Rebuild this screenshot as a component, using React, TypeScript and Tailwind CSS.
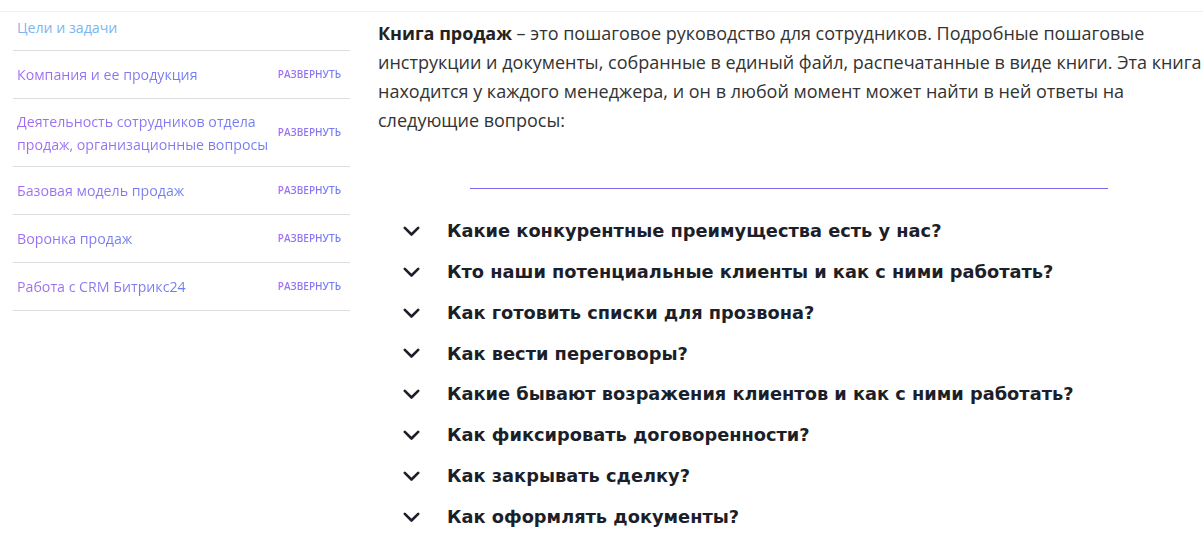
interface SideItem {
    title: string;
    expandable: boolean;
}

const items: SideItem[] = [
    { title: "Компания и ее продукция", expandable: true },
    { title: "Деятельность сотрудников отдела продаж, организационные вопросы", expandable: true },
    { title: "Базовая модель продаж", expandable: true },
    { title: "Воронка продаж", expandable: true },
    { title: "Работа с CRM Битрикс24", expandable: true },
]

const questions = [
    "Какие конкурентные преимущества есть у нас?",
    "Кто наши потенциальные клиенты и как с ними работать?",
    "Как готовить списки для прозвона?",
    "Как вести переговоры?",
    "Какие бывают возражения клиентов и как с ними работать?",
    "Как фиксировать договоренности?",
    "Как закрывать сделку?",
    "Как оформлять документы?",
]

const gradient = "bg-gradient-to-r from-[#a36bf2] to-[#6a7ff0] bg-clip-text text-transparent"

const Chevron = () => (
    <svg width="17" height="11" viewBox="0 0 17 11" className="ml-[25px] shrink-0">
        <polyline points="1.8,1.8 8.5,8.5 15.2,1.8" fill="none" stroke="#1c1f2a" strokeWidth="2.6" strokeLinecap="round" strokeLinejoin="round" />
    </svg>
)

const App = () => {

    // render

    return (
        <div className="w-[1203px] h-[541px] overflow-hidden bg-white font-['Open_Sans',sans-serif]">
            <div className="h-[11px]"></div>
            <div className="w-full h-[1px] bg-[#efefef]"></div>
            <div className="flex flex-row">

                {/* sidebar */}

                <ul className="w-[337px] ml-[13px] flex flex-col shrink-0">
                    <li className="h-[39px] pl-[4px] pb-[7px] flex items-center border-b border-[#dedede]">
                        <span className="text-[14.2px] text-[#7db6ee]">Цели и задачи</span>
                    </li>
                    {
                        items.map(item => (
                            <li
                                key={item.title}
                                className="min-h-[48px] pl-[4px] pr-[9px] py-[10.5px] flex flex-row items-center justify-between gap-1 border-b border-[#dedede]">
                                <span className={`text-[14.2px] leading-[23px] max-w-[262px] ${gradient}`}>{item.title}</span>
                                {
                                    item.expandable ?
                                    <span className={`text-[10px] font-semibold shrink-0 ${gradient}`}>РАЗВЕРНУТЬ</span>
                                    : <></>
                                }
                            </li>
                        ))
                    }
                </ul>

                {/* main content */}

                <div className="ml-[28px] w-[822px] shrink-0 flex flex-col">
                    <p className="mt-[7px] text-[18px] leading-[29px] text-[#333333] w-[830px]">
                        <b className="font-bold text-[#222222]">Книга продаж</b> – это пошаговое руководство для сотрудников. Подробные пошаговые инструкции и документы, собранные в единый файл, распечатанные в виде книги. Эта книга находится у каждого менеджера, и он в любой момент может найти в ней ответы на следующие вопросы:
                    </p>
                    <div className="mt-[53px] mx-auto w-[638px] h-[1px] bg-[#7a68ee]"></div>
                    <ul className="mt-[22px] flex flex-col">
                        {
                            questions.map(q => (
                                <li key={q} className="h-[40.85px] flex flex-row items-center">
                                    <Chevron />
                                    <span className="ml-[27px] text-[17.8px] font-bold text-[#1c1f2a] font-['DejaVu_Sans',sans-serif]">{q}</span>
                                </li>
                            ))
                        }
                    </ul>
                </div>
            </div>
        </div>
    )
}

export default App
